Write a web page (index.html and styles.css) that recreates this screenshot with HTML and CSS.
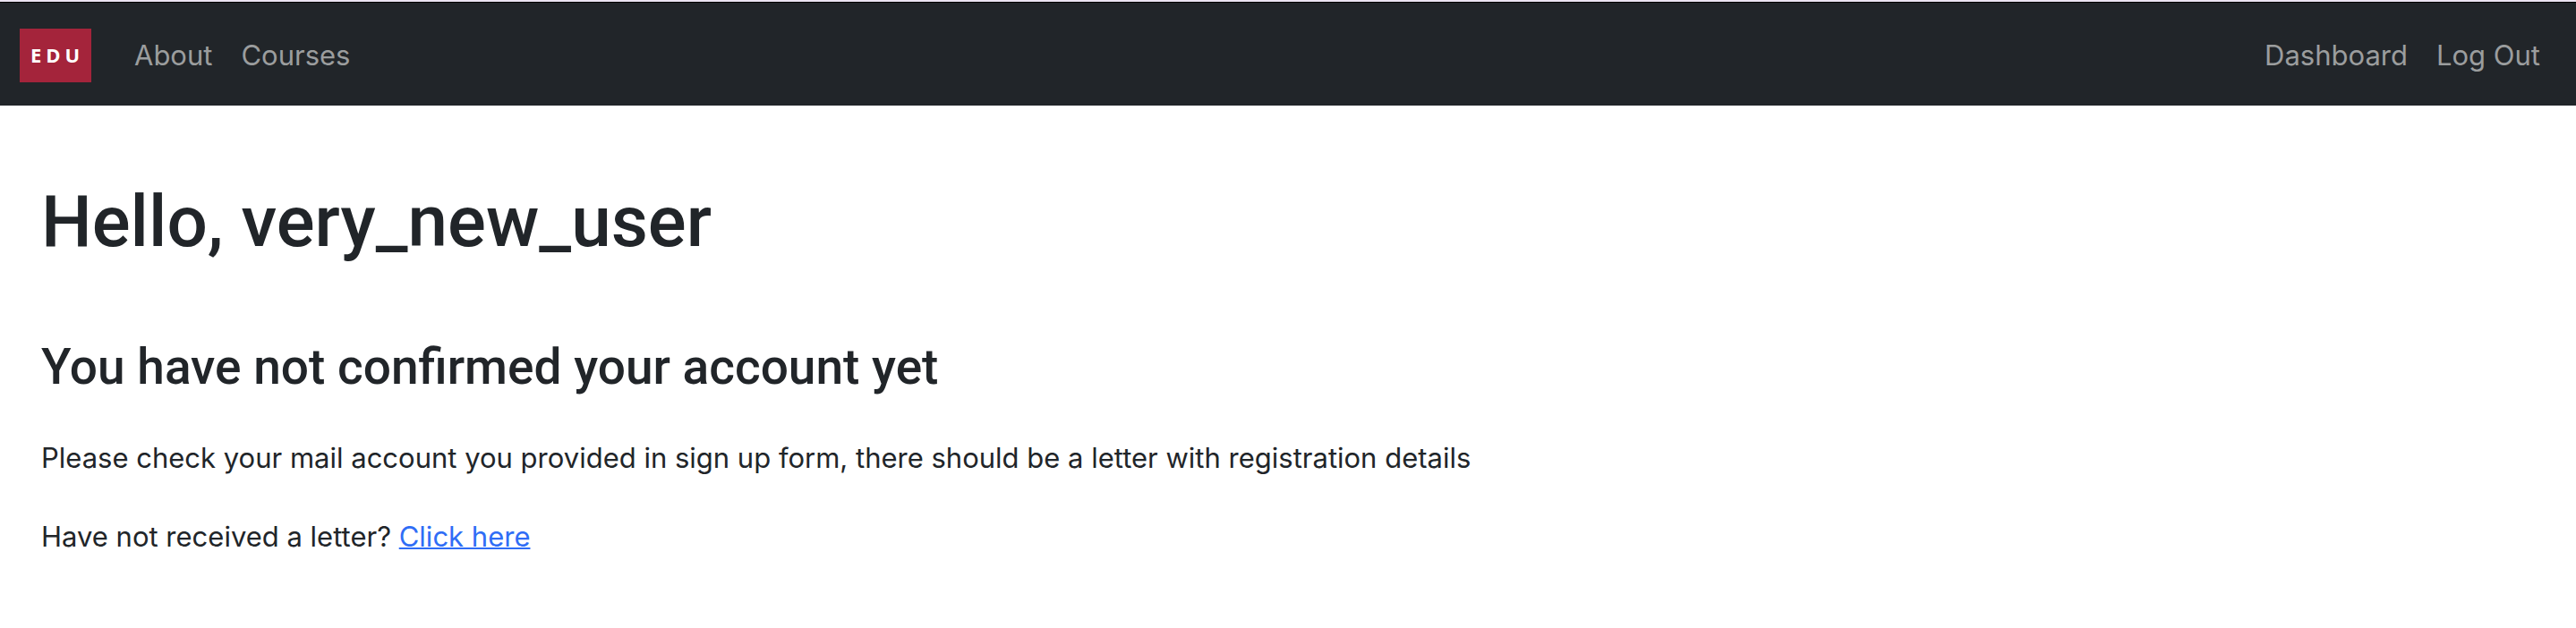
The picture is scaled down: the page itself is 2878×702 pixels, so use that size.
FILE: index.html
```html
<!DOCTYPE html>
<html lang="en">
<head>
<meta charset="utf-8">
<title>Dashboard</title>
<link rel="stylesheet" href="styles.css">
</head>
<body>
<nav class="navbar">
  <a class="brand" href="#">EDU</a>
  <a class="nav-link" href="#">About</a>
  <a class="nav-link" href="#">Courses</a>
  <div class="nav-end">
    <a class="nav-link" href="#">Dashboard</a>
    <a class="nav-link" href="#">Log Out</a>
  </div>
</nav>
<main class="content">
  <h1 class="title">Hello, very_new_user</h1>
  <h2 class="subtitle">You have not confirmed your account yet</h2>
  <p class="text">Please check your mail account you provided in sign up form, there should be a letter with registration details</p>
  <p class="text">Have not received a letter? <a class="link" href="#">Click here</a></p>
</main>
</body>
</html>
```
FILE: styles.css
```css
body {
  margin: 0;
  background: #fff;
  color: #212529;
  font-family: Inter, "Liberation Sans", sans-serif;
  font-size: 31px;
  line-height: 48px;
}
.navbar {
  display: flex;
  align-items: center;
  box-sizing: border-box;
  min-height: 118px;
  padding: 4px 24px 0 22px;
  border-top: 2px solid #ebe4f2;
  background: #212529;
  box-shadow: inset 0 1px #000;
}
.brand {
  box-sizing: border-box;
  width: 80px;
  height: 60px;
  margin-right: 32px;
  padding-left: 12px;
  background: #a4243b;
  color: #fff;
  font: bold 22px/58px "Open Sans", sans-serif;
  letter-spacing: 5px;
  text-decoration: none;
}
.nav-link {
  padding: 16px;
  color: #9b9d9e;
  text-decoration: none;
}
.nav-end {
  display: flex;
  margin-left: auto;
}
.content {
  padding: 82px 46px 0;
}
.title {
  margin: 0 0 80px;
  font-family: Roboto, sans-serif;
  font-size: 80px;
  font-weight: 500;
  line-height: 96px;
}
.subtitle {
  margin: 0 0 44px;
  font-family: Roboto, sans-serif;
  font-size: 55px;
  font-weight: 500;
  line-height: 68px;
}
.text {
  margin: 0 0 40px;
}
.link {
  color: #2f6df6;
  text-decoration-thickness: 2px;
}
```
